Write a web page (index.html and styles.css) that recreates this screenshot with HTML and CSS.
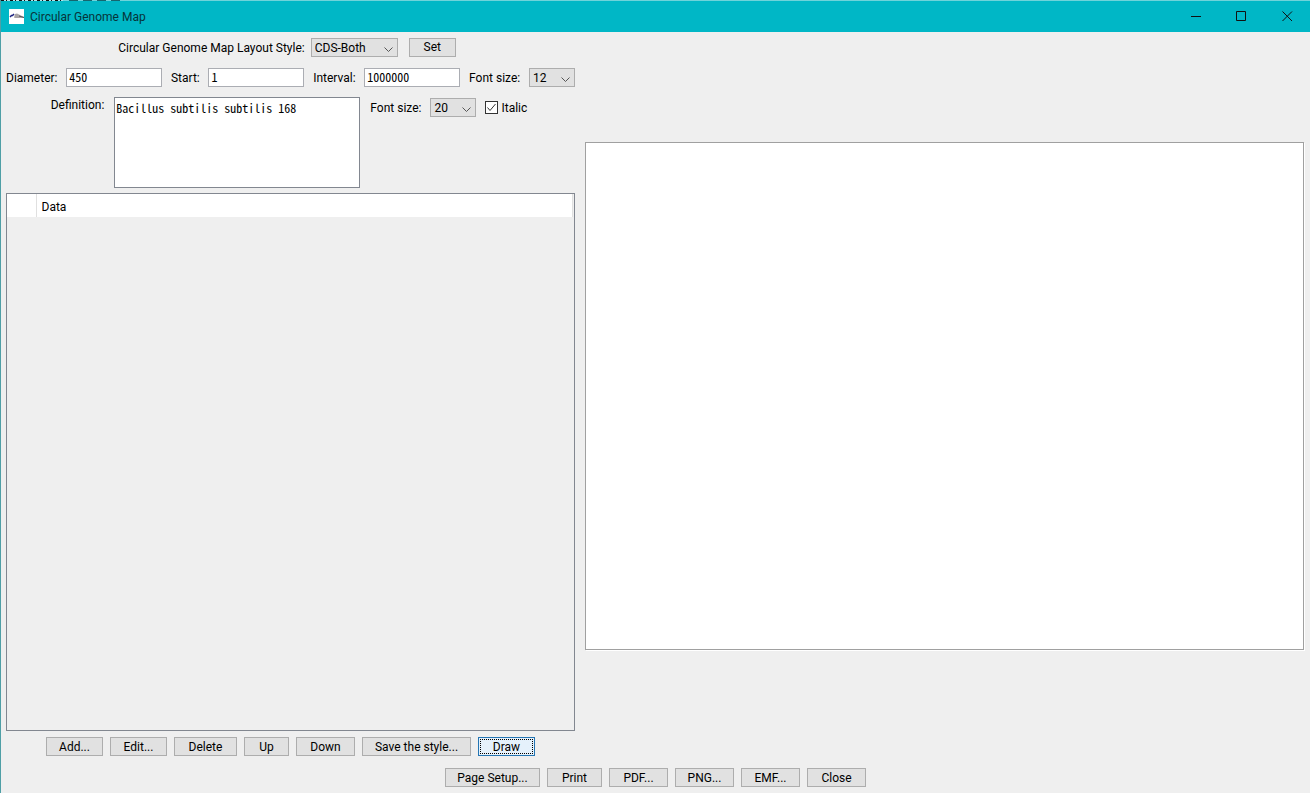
FILE: index.html
```html
<!DOCTYPE html>
<html lang="en">
<head>
<meta charset="utf-8">
<title>Circular Genome Map</title>
<link rel="stylesheet" href="styles.css">
</head>
<body>
<div class="window">
  <header class="titlebar">
    <svg class="app-icon" viewBox="0 0 15 15" aria-hidden="true">
      <rect width="15" height="15" fill="#fff"/>
      <path d="M5 8.500 L6 5 L8 4.500 L15 8 V9 H6Z" fill="#a9a4a6"/>
      <path d="M1 8 L2.500 6.500 L3.500 6.500 L5 5" stroke="#1d2280" stroke-width="1.500" fill="none"/>
      <path d="M10 7 L15 8.500" stroke="#555" stroke-width="1" fill="none"/>
    </svg>
    <h1 class="title">Circular Genome Map</h1>
    <div class="window-controls">
      <button class="window-button" aria-label="Minimize"><svg viewBox="0 0 11 11"><path d="M1 5.500H11"/></svg></button>
      <button class="window-button" aria-label="Maximize"><svg viewBox="0 0 11 11"><path d="M.5 .5H9.500V9.500H.5Z"/></svg></button>
      <button class="window-button" aria-label="Close window"><svg viewBox="0 0 11 11"><path d="M.5 .5L10 10M10 .5L.5 10"/></svg></button>
    </div>
  </header>
  <main class="content">
    <section class="settings">
      <div class="row row-center row-layout">
        <label for="layout">Circular Genome Map Layout Style:</label>
        <span class="select select-wide"><select id="layout"><option>CDS-Both</option></select><svg viewBox="0 0 9 5"><path d="M.5 .5L4.500 4.500L8.500 .5"/></svg></span>
        <button class="button set">Set</button>
      </div>
      <div class="row row-spread">
        <label for="diameter">Diameter:</label>
        <input class="field" id="diameter" type="text" value="450">
        <label for="start">Start:</label>
        <input class="field" id="start" type="text" value="1">
        <label for="interval">Interval:</label>
        <input class="field" id="interval" type="text" value="1000000">
        <label for="scale-size">Font size:</label>
        <span class="select"><select id="scale-size"><option>12</option></select><svg viewBox="0 0 9 5"><path d="M.5 .5L4.500 4.500L8.500 .5"/></svg></span>
      </div>
      <div class="row row-center row-top">
        <label for="definition">Definition:</label>
        <textarea class="definition" id="definition">Bacillus subtilis subtilis 168</textarea>
        <div class="row row-tight">
          <label for="title-size">Font size:</label>
          <span class="select"><select id="title-size"><option>20</option></select><svg viewBox="0 0 9 5"><path d="M.5 .5L4.500 4.500L8.500 .5"/></svg></span>
          <label class="check"><input type="checkbox" checked><svg viewBox="0 0 13 13"><path d="M2.500 6.500L5 9.500L10.500 3"/></svg><span>Italic</span></label>
        </div>
      </div>
      <div class="list">
        <table class="list-table">
          <thead><tr><th class="mark-column"></th><th>Data</th></tr></thead>
        </table>
      </div>
      <div class="actions">
        <button class="button short">Add...</button>
        <button class="button short">Edit...</button>
        <button class="button delete">Delete</button>
        <button class="button up">Up</button>
        <button class="button medium">Down</button>
        <button class="button save">Save the style...</button>
        <button class="button short default">Draw</button>
      </div>
    </section>
    <section class="preview" aria-label="Genome map"></section>
  </main>
  <footer class="actions footer">
    <button class="button setup">Page Setup...</button>
    <button class="button print">Print</button>
    <button class="button medium">PDF...</button>
    <button class="button medium">PNG...</button>
    <button class="button medium">EMF...</button>
    <button class="button medium">Close</button>
  </footer>
</div>
</body>
</html>
```
FILE: styles.css
```css
* { box-sizing: border-box; }
body {
  margin: 0;
  background: #efefef;
  color: #000;
  font: 12px/16px Roboto, "Liberation Sans", sans-serif;
}
button, select, input, textarea { font: inherit; color: inherit; margin: 0; border-radius: 0; }
.window {
  display: flex;
  flex-direction: column;
  min-height: 100vh;
  padding-bottom: 6px;
  border-left: 1px solid #4f9fa6;
}
.titlebar {
  position: relative;
  display: flex;
  align-items: center;
  height: 32px;
  padding-left: 8px;
  background: #00b7c6;
  border-top: 1px solid #6fd3da;
}
/* Sliver of the window behind, showing along the top edge */
.titlebar::before {
  content: "";
  position: absolute;
  left: 0;
  top: -1px;
  width: 62px;
  height: 1px;
  background: repeating-linear-gradient(90deg, #111 0 3px, #b5e4e8 3px 5px, #111 5px 6px, #b5e4e8 6px 9px);
}
.titlebar::after {
  content: "";
  position: absolute;
  left: 68px;
  top: -1px;
  width: 56px;
  height: 1px;
  background: repeating-linear-gradient(90deg, #16666e 0 9px, #6fd3da 9px 14px);
}
.app-icon { width: 15px; height: 15px; }
.title { margin: 0 0 0 6px; font: 12px/16px Roboto, sans-serif; color: #07343a; }
.window-controls { display: flex; margin-left: auto; }
.window-button {
  display: grid;
  place-items: center;
  width: 46px;
  height: 30px;
  padding: 0;
  border: 0;
  background: none;
}
.window-button svg { width: 11px; height: 11px; fill: none; stroke: #111; }
.content { display: flex; flex: 1; gap: 10px; padding: 5px 6px 0 5px; }
.settings { display: flex; flex-direction: column; flex: 0 0 569px; }
.row { display: flex; align-items: center; gap: 10px; min-height: 20px; }
.row > label { padding-top: 2px; }
.settings > .row { margin-bottom: 10px; }
.row-center { justify-content: center; }
.row-layout { gap: 6px; padding-right: 7px; }
.row-spread { justify-content: space-between; gap: 0; }
.row-tight { gap: 9px; }
.settings > .row-top { align-items: flex-start; margin-bottom: 5px; padding-right: 3px; }
.row-top > label { padding-top: 0; }
.field {
  width: 96px;
  height: 19px;
  padding: 0 2px 2px;
  border: 1px solid #abadb3;
  background: #fff;
}
.field, .definition { font: 12px/16px "Noto Sans Mono CJK JP", "Noto Sans CJK JP", monospace; }
.definition {
  display: block;
  width: 246px;
  height: 91px;
  padding: 2px 1px;
  border: 1px solid #828790;
  background: #fff;
  resize: none;
}
.select { position: relative; display: block; width: 46px; height: 19px; }
.select-wide { width: 87px; }
.select select {
  display: block;
  width: 100%;
  height: 100%;
  padding: 1px 3px 0;
  border: 1px solid #adadad;
  background: #e1e1e1;
  appearance: none;
}
.select svg {
  position: absolute;
  right: 5px;
  top: 9px;
  width: 9px;
  height: 5px;
  fill: none;
  stroke: #555;
  pointer-events: none;
}
.row > .check { position: relative; display: flex; align-items: center; gap: 3px; padding-top: 0; }
.check span { padding-top: 2px; }
.check input {
  width: 13px;
  height: 13px;
  border: 1px solid #333;
  background: #fff;
  appearance: none;
}
.check svg {
  position: absolute;
  left: 0;
  top: 3px;
  width: 13px;
  height: 13px;
  fill: none;
  stroke: #333;
  pointer-events: none;
}
.list { flex: 1; border: 1px solid #828790; padding-right: 1px; }
.list-table { width: 100%; border-collapse: collapse; table-layout: fixed; }
.list-table th {
  height: 23px;
  padding: 2px 5px 0;
  border-right: 1px solid #e0e0e0;
  background: #fff;
  font-weight: normal;
  text-align: left;
}
.list-table .mark-column { width: 29px; }
.actions { display: flex; justify-content: center; gap: 7px; padding-top: 6px; }
.footer { padding-top: 12px; }
.button {
  height: 19px;
  padding: 0;
  border: 1px solid #adadad;
  background: #e1e1e1;
  line-height: 16px;
}
.set { width: 47px; margin-left: 5px; }
.short { width: 57px; }
.medium { width: 59px; }
.delete { width: 63px; }
.up { width: 45px; }
.save { width: 109px; }
.setup { width: 95px; }
.print { width: 55px; }
.default {
  border-color: #2475b3;
  background: #e5f1fb;
  outline: 1px dotted #000;
  outline-offset: -3px;
}
.preview {
  flex: 1;
  align-self: center;
  aspect-ratio: 719 / 508;
  margin-bottom: 2px;
  border: 1px solid #a0a0a0;
  background: #fff;
  box-shadow: 1px 1px #fff;
}
```
